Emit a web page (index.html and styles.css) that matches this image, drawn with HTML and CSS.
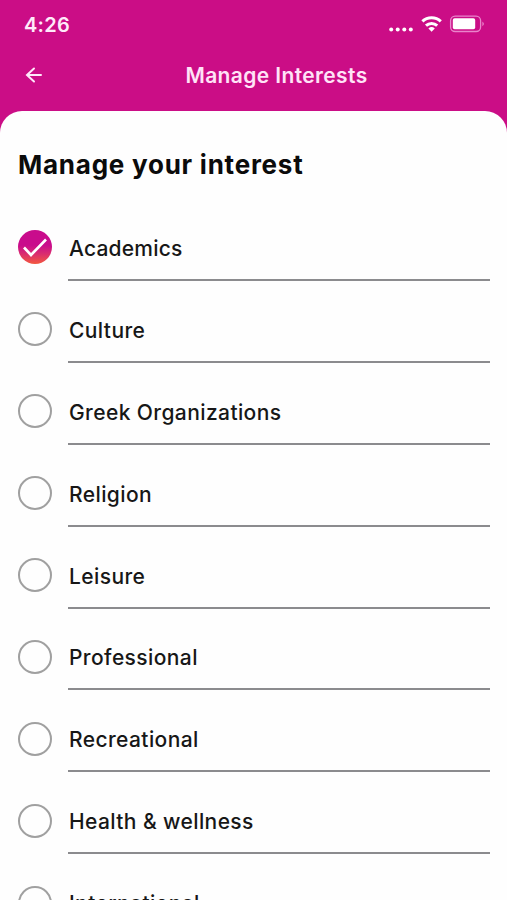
FILE: index.html
```html
<!DOCTYPE html>
<html lang="en">
<head>
<meta charset="utf-8">
<title>Manage Interests</title>
<link rel="stylesheet" href="styles.css">
</head>
<body>
<div class="screen">
  <div class="status">
    <span class="time">4:26</span>
    <svg class="indicators" width="97" height="18" viewBox="0 0 97 18" fill="#fff">
      <circle cx="2.2" cy="14.4" r="2"/><circle cx="8.7" cy="14.4" r="2"/><circle cx="15.3" cy="14.4" r="2"/><circle cx="21.8" cy="14.4" r="2"/>
      <g fill="none" stroke="#fff" stroke-width="3"><path d="M33.4 6.4a13.2 13.2 0 0 1 18.4 0"/><path d="M37 10.6a8.2 8.2 0 0 1 11.2 0"/></g>
      <path d="M39.4 13.4q3.2-2.6 6.4 0l-3.2 3.3z"/>
      <rect x="61.6" y="1.1" width="30" height="15.4" rx="4.5" fill="none" stroke="#e984cb" stroke-width="1.3"/>
      <rect x="63.8" y="3.3" width="22.4" height="11" rx="1.8"/>
      <path d="M93.4 6.5q3 2.4 0 4.8z" fill="#e984cb"/>
    </svg>
  </div>
  <header class="bar">
    <svg class="back" width="18" height="18" viewBox="0 0 18 18" fill="none" stroke="#ffe8fa" stroke-width="2" stroke-linecap="round"><path d="M16 9H2.5M9 2.5 2 9l7 6.5"/></svg>
    <h1 class="title">Manage Interests</h1>
  </header>
  <main class="sheet">
    <h2 class="heading">Manage your interest</h2>
    <ul class="list">
      <li class="row"><span class="check on"><svg width="34" height="34" viewBox="0 0 34 34" fill="none" stroke="#fff" stroke-width="2.6"><path d="m6 17.5 7 7.5L28 9.5"/></svg></span><span class="label snug">Academics</span></li>
      <li class="row"><span class="check"></span><span class="label">Culture</span></li>
      <li class="row"><span class="check"></span><span class="label">Greek Organizations</span></li>
      <li class="row"><span class="check"></span><span class="label">Religion</span></li>
      <li class="row"><span class="check"></span><span class="label">Leisure</span></li>
      <li class="row"><span class="check"></span><span class="label">Professional</span></li>
      <li class="row"><span class="check"></span><span class="label">Recreational</span></li>
      <li class="row"><span class="check"></span><span class="label">Health &amp; wellness</span></li>
      <li class="row"><span class="check"></span><span class="label">International</span></li>
    </ul>
  </main>
</div>
</body>
</html>
```
FILE: styles.css
```css
* { box-sizing: border-box; }
body { margin: 0; font-family: Inter, "Liberation Sans", sans-serif; }
.screen { height: 900px; overflow: hidden; background: #cb0d86; display: flex; flex-direction: column; }
.status { height: 48px; flex: none; display: flex; justify-content: space-between; padding: 0 21px 0 24px; }
.time { font-size: 20px; line-height: 50px; font-weight: 600; color: #ffeafa; letter-spacing: 0.3px; }
.indicators { margin-top: 15px; }
.bar { height: 62px; flex: none; display: flex; }
.back { flex: none; margin: 18px 0 0 25px; }
.title { flex: 1; margin: 0; padding-left: 3px; text-align: center; font-size: 21px; line-height: 56px; font-weight: 600; color: #ffe3f7; letter-spacing: 0.38px; white-space: nowrap; }
.sheet { flex: 1; min-height: 0; overflow: hidden; background: #fefefe; border-radius: 22px 22px 0 0; margin-top: 1px; padding: 0 17px 0 18px; }
.heading { margin: 0; height: 88px; line-height: 108px; font-size: 26px; font-weight: 650; color: #0b0b0b; letter-spacing: 0.76px; white-space: nowrap; }
.list { list-style: none; margin: 0; padding: 0; }
.row { height: 81.9px; display: grid; grid-template-columns: 34px 1fr; column-gap: 16px; }
.check { width: 34px; height: 34px; margin-top: 31.4px; border: 2px solid #a0a0a0; border-radius: 50%; }
.check.on { border: 0; background: linear-gradient(#c90c8c 45%, #d82a72 68%, #f3583f 100%); }
.check svg { display: block; }
.label { border-bottom: 2px solid #8b8b8e; padding-left: 1px; line-height: 99px; font-size: 21px; font-weight: 500; color: #171717; letter-spacing: 0.4px; white-space: nowrap; height: 82px; }
.label.snug { letter-spacing: 0.2px; }
```
